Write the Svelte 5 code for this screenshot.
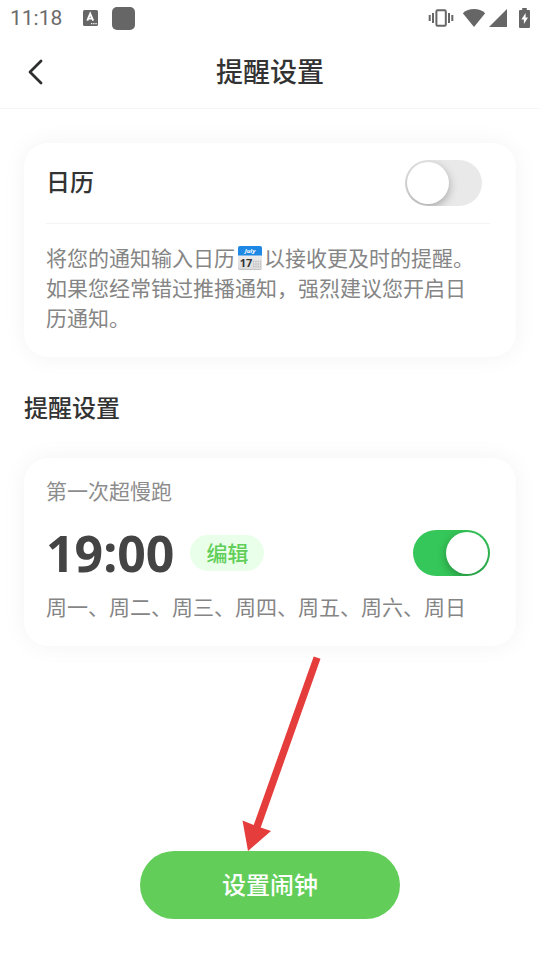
<script lang="ts">
  let calendarOn = $state(false);

  let alarm = $state({
    name: '第一次超慢跑',
    time: '19:00',
    days: ['周一', '周二', '周三', '周四', '周五', '周六', '周日'],
    enabled: true
  });

  const dayList = $derived(alarm.days.join('、'));
</script>

<div class="screen">
  <div class="status">
    <span class="clock">11:18</span>
    <svg class="ime" width="16" height="16" viewBox="0 0 16 16" aria-hidden="true">
      <rect width="15" height="16" rx="1.5" fill="#666" />
      <path d="M4.3 10.6 7.2 3.6 10.2 10.6M5.3 8.6H9.2" fill="none" stroke="#fff" stroke-width="1.9" />
      <path d="M8 13.6h1.3M10.2 13.6h1.3M12.4 13.6h1.3" stroke="#fff" stroke-width="1.3" />
    </svg>
    <span class="app-dot"></span>
    <svg class="vibrate" width="26" height="18" viewBox="0 0 26 18" aria-hidden="true">
      <rect x="8.4" y="1.2" width="9.4" height="15.6" rx="1.2" fill="none" stroke="#666" stroke-width="2" />
      <path d="M5 4v10M21 4v10M1.7 6v6M24.3 6v6" stroke="#666" stroke-width="2" />
    </svg>
    <svg class="wifi" width="24" height="20" viewBox="0 0 24 20" aria-hidden="true">
      <path d="M12 19 .8 5.2Q5.500 1 12 1t11.200 4.200Z" fill="#666" />
    </svg>
    <svg class="signal" width="18" height="20" viewBox="0 0 18 20" aria-hidden="true">
      <path d="M18 1v18H0Z" fill="#666" />
    </svg>
    <svg class="battery" width="11" height="20" viewBox="0 0 11 20" aria-hidden="true">
      <path d="M3.200 0h4.600v2H10q1 0 1 1v16q0 1-1 1H1q-1 0-1-1V3q0-1 1-1h2.200Z" fill="#666" />
      <path d="M6.600 5 2.400 11.600h2.500V16L9 9.400H6.600Z" fill="#fff" />
    </svg>
  </div>

  <header class="header">
    <button class="back" type="button" aria-label="返回">
      <svg width="16" height="26" viewBox="0 0 16 26" aria-hidden="true">
        <path d="M13 2 2 13l11 11" fill="none" stroke="#2c2e30" stroke-width="2.800" stroke-linecap="round" stroke-linejoin="round" />
      </svg>
    </button>
    <h1>提醒设置</h1>
  </header>

  <main>
    <section class="card">
      <div class="calendar-row">
        <label class="calendar-label" for="calendar">日历</label>
        <input id="calendar" class="switch" type="checkbox" role="switch" bind:checked={calendarOn} />
      </div>
      <p class="hint">
        将您的通知输入日历<svg class="emoji" width="24" height="24" viewBox="0 0 24 24" aria-hidden="true">
          <defs>
            <linearGradient id="sheet" x1="0" y1="0" x2="0" y2="1">
              <stop offset="0" stop-color="#f6f6f6" />
              <stop offset="1" stop-color="#dcdcdc" />
            </linearGradient>
          </defs>
          <rect y="1" width="24" height="23" rx="2" fill="#c4c4c4" />
          <rect width="24" height="23" rx="2" fill="url(#sheet)" />
          <path d="M0 9.500V2q0-2 2-2h20q2 0 2 2v7.500Z" fill="#1e88e5" />
          <text x="12" y="7" class="month">July</text>
          <text x="8" y="21" class="date">17</text>
          <path d="M15 15.500h8M15 18h8M15 20.500h8" stroke="#bbb" stroke-width="1.300" stroke-dasharray="1.300 1" />
        </svg>以接收更及时的提醒。如果您经常错过推播通知，强烈建议您开启日历通知。
      </p>
    </section>

    <h2>提醒设置</h2>

    <section class="card alarm">
      <label class="name" for="alarm">{alarm.name}</label>
      <div class="time-row">
        <time class="time">{alarm.time}</time>
        <button class="edit" type="button">编辑</button>
        <input id="alarm" class="switch" type="checkbox" role="switch" bind:checked={alarm.enabled} />
      </div>
      <p class="days">{dayList}</p>
    </section>

    <svg class="pointer" width="102" height="195" viewBox="0 0 102 195" aria-hidden="true">
      <path d="M94.700 .5 101.500 2.800 41.700 171.500 52 175 29 195 23.500 164.500 34.700 169Z" fill="#e53c3c" />
    </svg>

    <button class="primary" type="button">设置闹钟</button>
  </main>
</div>

<style>
  :global(body) {
    margin: 0;
    background: #fff;
  }

  .screen {
    min-height: 100vh;
    background: #fff;
    color: #333;
    font-family: "Noto Sans CJK SC", "Noto Sans", sans-serif;
  }

  button {
    padding: 0;
    border: 0;
    background: none;
    font: inherit;
    cursor: pointer;
  }

  h1,
  h2,
  p {
    margin: 0;
  }

  .status {
    display: flex;
    align-items: center;
    height: 36px;
    padding: 0 10px;
  }

  .clock {
    color: #6b6b6b;
    font-family: Roboto, sans-serif;
    font-size: 21px;
    line-height: 36px;
  }

  .ime {
    margin-left: 21px;
  }

  .app-dot {
    width: 23px;
    height: 23px;
    margin-left: 13px;
    border-radius: 5px;
    background: #666;
  }

  .vibrate {
    margin-left: auto;
  }

  .wifi {
    margin-left: 8px;
  }

  .signal {
    margin-left: 3px;
  }

  .battery {
    margin-left: 12px;
  }

  .header {
    display: grid;
    grid-template-columns: 48px 1fr 48px;
    align-items: center;
    height: 72px;
    padding: 0 12px;
    border-bottom: 1px solid #f6f6f6;
  }

  .back {
    display: grid;
    place-items: center;
    height: 48px;
  }

  h1 {
    padding-bottom: 2px;
    font-size: 27px;
    font-weight: 500;
    line-height: 40px;
    text-align: center;
  }

  main {
    display: flex;
    flex-direction: column;
    padding: 34px 24px 40px;
  }

  .card {
    padding: 0 26px 25px 22px;
    border-radius: 24px;
    background: #fff;
    box-shadow: 0 0 24px rgba(0, 0, 0, 0.05);
  }

  .calendar-row {
    display: flex;
    align-items: center;
    justify-content: space-between;
    height: 80px;
    padding-right: 8px;
    border-bottom: 1px solid #f4f4f4;
  }

  .calendar-label {
    padding-bottom: 4px;
    font-size: 24px;
    font-weight: 500;
    line-height: 36px;
  }

  .hint {
    padding-top: 18px;
    padding-right: 8px;
    color: #858585;
    font-size: 21px;
    line-height: 30px;
  }

  .emoji {
    margin: 0 2px 0 3px;
    vertical-align: -4px;
  }

  .month {
    fill: #fff;
    font: italic 700 6px "Open Sans", sans-serif;
    text-anchor: middle;
  }

  .date {
    fill: #333;
    font: 700 11px "Open Sans", sans-serif;
    text-anchor: middle;
  }

  h2 {
    margin: 32px 0 33px;
    font-size: 24px;
    font-weight: 500;
    line-height: 36px;
  }

  .alarm {
    padding-top: 17px;
  }

  .name {
    display: block;
    color: #8c8c8c;
    font-size: 21px;
    line-height: 30px;
  }

  .time-row {
    display: flex;
    align-items: center;
    height: 46px;
    margin: 25px 0 15px;
  }

  .time {
    color: #444;
    font-family: "Noto Sans", sans-serif;
    font-size: 50px;
    font-weight: 700;
    line-height: 46px;
  }

  .edit {
    height: 36px;
    margin-left: 16px;
    padding: 0 16px 2px;
    border-radius: 18px;
    background: #eaffea;
    color: #61ce59;
    font-size: 21px;
    font-weight: 500;
    line-height: 34px;
  }

  .time-row .switch {
    margin-left: auto;
  }

  .days {
    color: #858585;
    font-size: 21px;
    line-height: 30px;
  }

  .switch {
    display: flex;
    width: 77px;
    height: 46px;
    margin: 0;
    padding: 2px;
    box-sizing: border-box;
    appearance: none;
    overflow: hidden;
    border-radius: 23px;
    background: #e9e9e9;
    cursor: pointer;
  }

  .switch::before {
    content: '';
    width: 42px;
    height: 42px;
    border-radius: 50%;
    background: #fff;
    box-shadow: 0 3px 10px rgba(0, 0, 0, 0.3);
  }

  .switch:checked {
    justify-content: flex-end;
    background: #35c759;
  }

  .pointer {
    display: block;
    margin: 10px auto 0;
  }

  .primary {
    align-self: center;
    width: 260px;
    max-width: 100%;
    height: 68px;
    padding-bottom: 2px;
    border-radius: 34px;
    background: #62ce59;
    color: #fff;
    font-size: 24px;
    font-weight: 500;
    line-height: 36px;
  }
</style>
